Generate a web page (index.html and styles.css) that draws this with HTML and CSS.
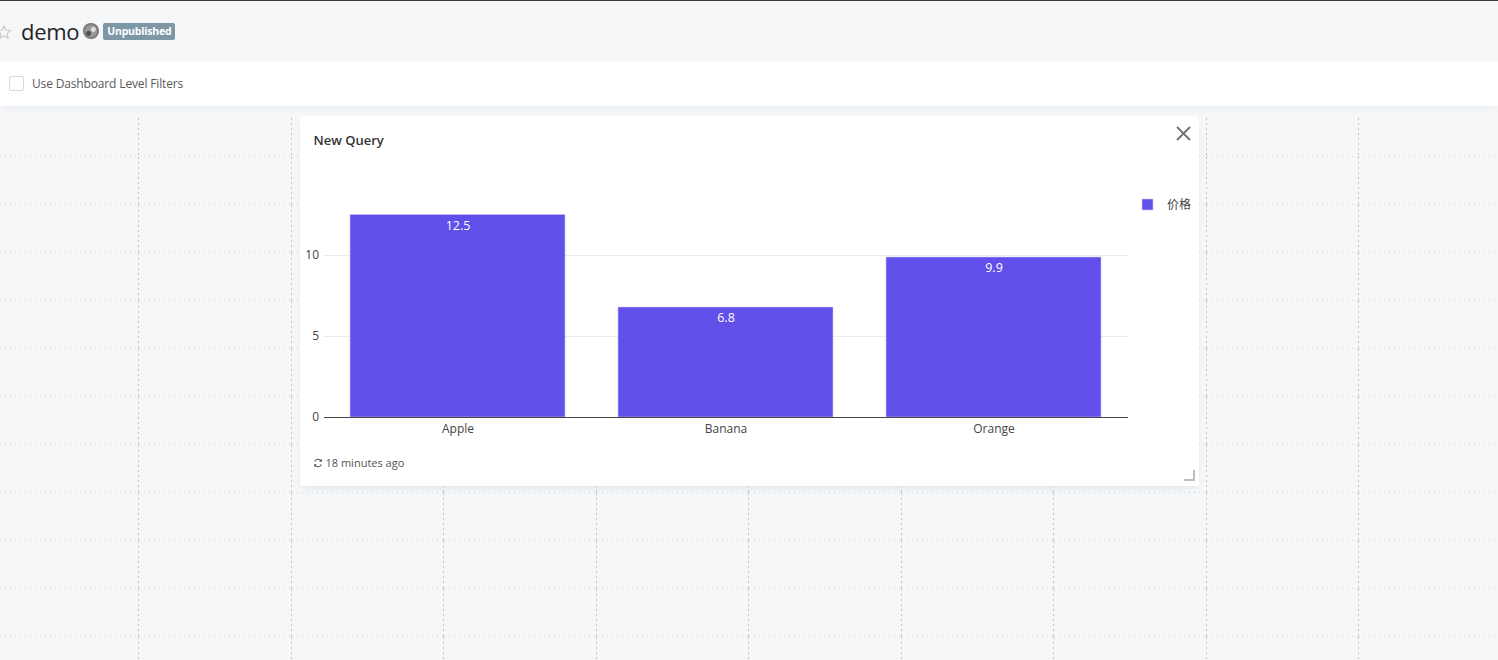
FILE: index.html
```html
<!DOCTYPE html>
<html lang="en">
<head>
<meta charset="utf-8">
<title>demo</title>
<link rel="stylesheet" href="styles.css">
</head>
<body>
<div class="topline"></div>
<header class="page-header">
  <svg class="star" width="16" height="16" viewBox="0 0 24 24"><path d="M12 2.5l2.9 6.6 7.1.6-5.4 4.7 1.6 7-6.2-3.7-6.2 3.7 1.6-7L2 9.7l7.1-.6z" fill="none" stroke="#c8c8c8" stroke-width="1.6" stroke-linejoin="round"/></svg>
  <h1 class="title">demo</h1>
  <span class="avatar"></span>
  <span class="badge">Unpublished</span>
</header>
<div class="filter-bar">
  <label class="check-label"><span class="checkbox"></span>Use Dashboard Level Filters</label>
</div>
<main class="canvas">
  <div class="grid-bg">
    <div class="cell"></div><div class="cell"></div><div class="cell"></div><div class="cell"></div><div class="cell"></div><div class="cell"></div><div class="cell"></div><div class="cell"></div><div class="cell"></div><div class="cell"></div>
    <div class="cell"></div><div class="cell"></div><div class="cell"></div><div class="cell"></div><div class="cell"></div><div class="cell"></div><div class="cell"></div><div class="cell"></div><div class="cell"></div><div class="cell"></div>
    <div class="cell"></div><div class="cell"></div><div class="cell"></div><div class="cell"></div><div class="cell"></div><div class="cell"></div><div class="cell"></div><div class="cell"></div><div class="cell"></div><div class="cell"></div>
    <div class="cell"></div><div class="cell"></div><div class="cell"></div><div class="cell"></div><div class="cell"></div><div class="cell"></div><div class="cell"></div><div class="cell"></div><div class="cell"></div><div class="cell"></div>
    <div class="cell"></div><div class="cell"></div><div class="cell"></div><div class="cell"></div><div class="cell"></div><div class="cell"></div><div class="cell"></div><div class="cell"></div><div class="cell"></div><div class="cell"></div>
    <div class="cell"></div><div class="cell"></div><div class="cell"></div><div class="cell"></div><div class="cell"></div><div class="cell"></div><div class="cell"></div><div class="cell"></div><div class="cell"></div><div class="cell"></div>
    <div class="cell"></div><div class="cell"></div><div class="cell"></div><div class="cell"></div><div class="cell"></div><div class="cell"></div><div class="cell"></div><div class="cell"></div><div class="cell"></div><div class="cell"></div>
    <div class="cell"></div><div class="cell"></div><div class="cell"></div><div class="cell"></div><div class="cell"></div><div class="cell"></div><div class="cell"></div><div class="cell"></div><div class="cell"></div><div class="cell"></div>
    <div class="cell"></div><div class="cell"></div><div class="cell"></div><div class="cell"></div><div class="cell"></div><div class="cell"></div><div class="cell"></div><div class="cell"></div><div class="cell"></div><div class="cell"></div>
    <div class="cell"></div><div class="cell"></div><div class="cell"></div><div class="cell"></div><div class="cell"></div><div class="cell"></div><div class="cell"></div><div class="cell"></div><div class="cell"></div><div class="cell"></div>
    <div class="cell"></div><div class="cell"></div><div class="cell"></div><div class="cell"></div><div class="cell"></div><div class="cell"></div><div class="cell"></div><div class="cell"></div><div class="cell"></div><div class="cell"></div>
    <div class="cell"></div><div class="cell"></div><div class="cell"></div><div class="cell"></div><div class="cell"></div><div class="cell"></div><div class="cell"></div><div class="cell"></div><div class="cell"></div><div class="cell"></div>
  </div>
  <div class="widget-layer">
    <section class="widget">
      <div class="widget-header">
        <h2 class="widget-title">New Query</h2>
        <button class="close-btn" aria-label="close">
          <svg width="15" height="15" viewBox="0 0 15 15"><path d="M1 1L14 14M14 1L1 14" stroke="#707070" stroke-width="1.8"/></svg>
        </button>
      </div>
      <div class="widget-body">
        <svg class="chart" width="899" height="290" viewBox="0 0 899 290">
          <g class="gridlines" stroke="#ebebeb" stroke-width="1">
            <line x1="24" y1="95.5" x2="828" y2="95.5"/>
            <line x1="24" y1="176.5" x2="828" y2="176.5"/>
          </g>
          <g class="ytick" font-size="12" fill="#444" text-anchor="end">
            <text x="19" y="99">10</text>
            <text x="19" y="180">5</text>
            <text x="19" y="261">0</text>
          </g>
          <g class="bars" fill="#604fe9" stroke="#c9c3f7" stroke-width="0.6">
            <rect x="50" y="54.5" width="215" height="202.5"/>
            <rect x="318" y="147" width="215" height="110"/>
            <rect x="586" y="97" width="215" height="160"/>
          </g>
          <g class="vlabels" font-size="12.5" fill="#fff" text-anchor="middle">
            <text x="158" y="70">12.5</text>
            <text x="426" y="162">6.8</text>
            <text x="694" y="112">9.9</text>
          </g>
          <line x1="24" y1="257.5" x2="828" y2="257.5" stroke="#444" stroke-width="1"/>
          <g class="xtick" font-size="12" fill="#444" text-anchor="middle">
            <text x="158" y="273">Apple</text>
            <text x="426" y="273">Banana</text>
            <text x="694" y="273">Orange</text>
          </g>
          <rect x="842" y="39" width="11" height="11" fill="#604fe9" stroke="#c9c3f7" stroke-width="0.6"/>
          <text class="legend" x="867" y="48.5" font-size="12" fill="#444">价格</text>
        </svg>
      </div>
      <div class="widget-footer">
        <svg class="refresh" width="10" height="10" viewBox="0 0 10 10"><path d="M8.3 3.2A3.7 3.7 0 0 0 1.6 3.6M1.7 6.8A3.7 3.7 0 0 0 8.4 6.4" fill="none" stroke="#555" stroke-width="1.1"/><path d="M8.9 0.9L8.8 3.8 6 3.4z M1.1 9.1L1.2 6.2 4 6.6z" fill="#555"/></svg>
        <span>18 minutes ago</span>
      </div>
      <span class="resize-handle"></span>
    </section>
  </div>
</main>
</body>
</html>
```
FILE: styles.css
```css
* { box-sizing: border-box; }
html, body {
  margin: 0;
  padding: 0;
  background: #f6f7f9;
  font-family: "Open Sans", "Noto Sans", "Liberation Sans", "Noto Sans CJK SC", sans-serif;
  color: #333;
  overflow: hidden;
  width: 1498px;
  height: 660px;
}
.topline {
  height: 1px;
  background: #3a3a3a;
}
.page-header {
  height: 60px;
  display: flex;
  align-items: center;
  margin-left: -4px;
}
.star {
  flex: none;
  margin-top: 1px;
}
.title {
  margin: 0 0 0 9px;
  font-size: 22px;
  font-weight: 400;
  color: #232323;
  line-height: 1;
  letter-spacing: -0.3px;
  padding-bottom: 1px;
}
.avatar {
  width: 16px;
  height: 16px;
  border-radius: 50%;
  margin-left: 4px;
  background:
    radial-gradient(circle at 65% 40%, #e0e0e0 0 2px, transparent 3px),
    radial-gradient(circle at 35% 65%, #4e4e4e 0 2px, transparent 3px),
    radial-gradient(circle at 50% 50%, #9a9a9a 0 5px, #6a6a6a 8px);
}
.badge {
  margin-left: 4px;
  background: #7e97a4;
  color: #fff;
  font-size: 10.5px;
  font-weight: 700;
  line-height: 17px;
  height: 17px;
  padding: 0 4px;
  border-radius: 2px;
  letter-spacing: -0.2px;
}
.filter-bar {
  height: 45px;
  background: #fff;
  display: flex;
  align-items: center;
  padding-left: 9px;
  box-shadow: 0 3px 6px -2px rgba(102, 136, 153, 0.12);
  position: relative;
  z-index: 2;
}
.check-label {
  display: flex;
  align-items: center;
  font-size: 12px;
  color: #595959;
  letter-spacing: -0.15px;
}
.checkbox {
  width: 15px;
  height: 15px;
  border: 1px solid #d9d9d9;
  border-radius: 2px;
  background: #fff;
  margin-right: 8px;
}
.canvas {
  position: relative;
  margin-top: 3px;
  height: 551px;
}
.grid-bg {
  position: absolute;
  inset: 9px 0 0 0;
  display: grid;
  grid-template-columns: 139px repeat(9, 152.5px);
  grid-template-rows: 39px repeat(11, 48px);
  overflow: hidden;
}
.cell {
  background-image:
    linear-gradient(to bottom, #c2c2c2 2px, transparent 2px),
    linear-gradient(to right, #d2d2d2 1px, transparent 1px);
  background-size: 1px 5px, 5px 1px;
  background-repeat: repeat-y, repeat-x;
  background-position: right top, left bottom;
}
.widget-layer {
  position: relative;
  z-index: 1;
  display: grid;
  grid-template-columns: 139px repeat(9, 152.5px);
  grid-template-rows: repeat(8, 48px);
}
.widget {
  grid-column: 3 / 9;
  grid-row: 1 / 9;
  margin: 7px 8px;
  background: #fff;
  border-radius: 3px;
  box-shadow: 0 4px 9px -3px rgba(102, 136, 153, 0.18);
  display: flex;
  flex-direction: column;
  position: relative;
}
.widget-header {
  height: 44px;
  display: flex;
  justify-content: space-between;
  align-items: flex-start;
  padding: 15px 8px 0 14px;
}
.widget-title {
  margin: 0;
  font-family: "Open Sans", "Noto Sans", sans-serif;
  font-size: 13px;
  font-weight: 600;
  line-height: 18px;
  color: #323232;
}
.close-btn {
  border: 0;
  background: none;
  padding: 0;
  margin-top: -5px;
  width: 15px;
  height: 15px;
  display: block;
}
.close-btn svg { display: block; }
.widget-body {
  height: 290px;
}
.chart {
  display: block;
  font-family: "Open Sans", "Noto Sans", "Noto Sans CJK SC", sans-serif;
}
.widget-footer {
  display: flex;
  align-items: flex-start;
  gap: 3px;
  padding: 5px 14px 0 13px;
  height: 36px;
  font-size: 11px;
  line-height: 16px;
  color: #555;
}
.refresh {
  margin-top: 3px;
}
.resize-handle {
  position: absolute;
  right: 4px;
  bottom: 5px;
  width: 11px;
  height: 11px;
  border-right: 2px solid #bdbdbd;
  border-bottom: 2px solid #bdbdbd;
}
```
